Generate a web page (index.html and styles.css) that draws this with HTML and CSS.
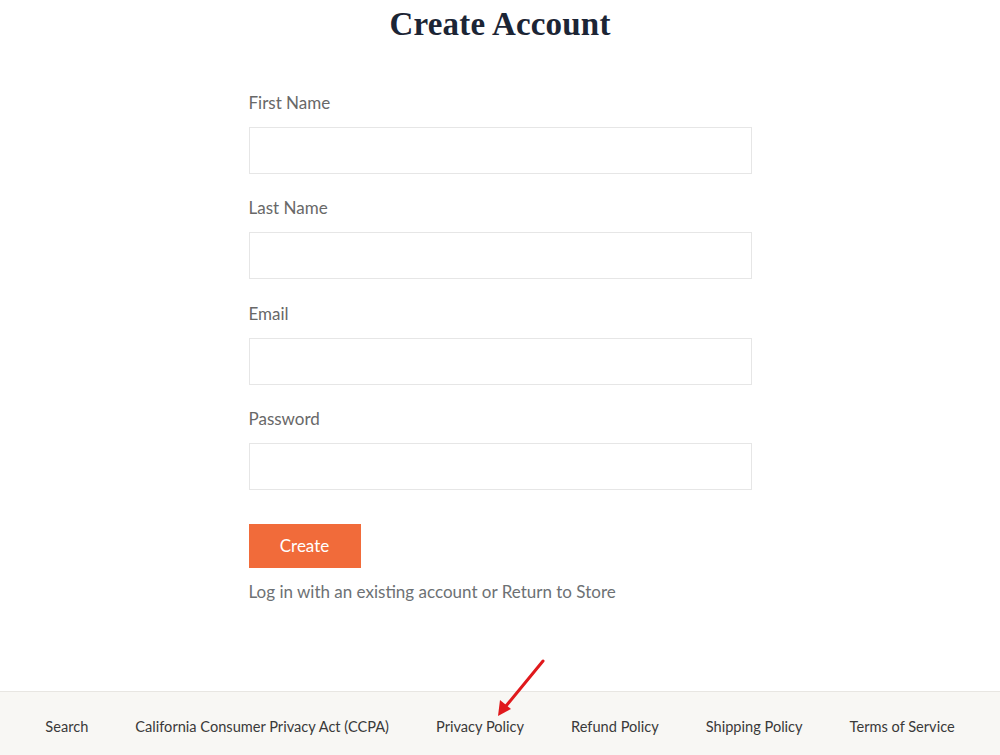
FILE: index.html
```html
<!DOCTYPE html>
<html lang="en">
<head>
<meta charset="utf-8">
<title>Create Account</title>
<link rel="stylesheet" href="styles.css">
</head>
<body>
<main class="page">
  <h1 class="title">Create Account</h1>
  <form class="form">
    <div class="field">
      <label class="label">First Name</label>
      <input class="input" type="text">
    </div>
    <div class="field">
      <label class="label">Last Name</label>
      <input class="input" type="text">
    </div>
    <div class="field">
      <label class="label">Email</label>
      <input class="input" type="email">
    </div>
    <div class="field">
      <label class="label">Password</label>
      <input class="input" type="password">
    </div>
    <button class="btn" type="button">Create</button>
    <p class="links"><a href="#">Log in with an existing account</a> or <a href="#">Return to Store</a></p>
  </form>
</main>
<footer class="footer">
  <nav class="footer-nav">
    <a href="#">Search</a>
    <a href="#">California Consumer Privacy Act (CCPA)</a>
    <a href="#">Privacy Policy</a>
    <a href="#">Refund Policy</a>
    <a href="#">Shipping Policy</a>
    <a href="#">Terms of Service</a>
  </nav>
</footer>
<svg class="arrow" width="1000" height="755" viewBox="0 0 1000 755">
  <line x1="543" y1="661" x2="506" y2="706" stroke="#e0191c" stroke-width="3" stroke-linecap="round"/>
  <polygon points="498,716 500,700 511,709" fill="#e0191c"/>
</svg>
</body>
</html>
```
FILE: styles.css
```css
html, body {
  margin: 0;
  padding: 0;
  background: #ffffff;
}
body {
  font-family: Lato, "Open Sans", Arial, sans-serif;
  position: relative;
  overflow: hidden;
}
.page {
  display: flex;
  flex-direction: column;
  align-items: center;
}
.title {
  margin: 4px 0 0;
  font-family: "Liberation Serif", "Times New Roman", serif;
  font-weight: 700;
  font-size: 33px;
  line-height: 40px;
  color: #1c2535;
  letter-spacing: 0.2px;
}
.form {
  width: 503px;
  margin-top: 47px;
  display: flex;
  flex-direction: column;
}
.field {
  display: flex;
  flex-direction: column;
  margin-bottom: 22.4px;
}
.label {
  font-size: 17px;
  line-height: 24px;
  color: #686868;
  margin-bottom: 12px;
}
.input {
  box-sizing: border-box;
  height: 47px;
  width: 100%;
  border: 1px solid #e6e6e6;
  background: #fff;
  margin: 0;
  padding: 0 12px;
}
.btn {
  align-self: flex-start;
  width: 112px;
  height: 44px;
  margin-top: 11px;
  border: 0;
  background: #f16b3a;
  color: #ffffff;
  font-family: Lato, "Open Sans", Arial, sans-serif;
  font-size: 17px;
  padding: 0;
}
.links {
  margin: 12px 0 0;
  font-size: 17px;
  line-height: 24px;
  color: #6d7174;
}
.links a {
  color: #6d7174;
  text-decoration: none;
}
.footer {
  margin-top: 87px;
  border-top: 1px solid #e8e6e2;
  background: #f8f7f4;
  padding: 24px 0 30px;
}
.footer-nav {
  display: flex;
  justify-content: center;
  gap: 47px;
}
.footer-nav a {
  font-size: 14.6px;
  line-height: 22px;
  color: #3a3a3a;
  text-decoration: none;
}
.arrow {
  position: absolute;
  left: 0;
  top: 0;
  pointer-events: none;
}
```
